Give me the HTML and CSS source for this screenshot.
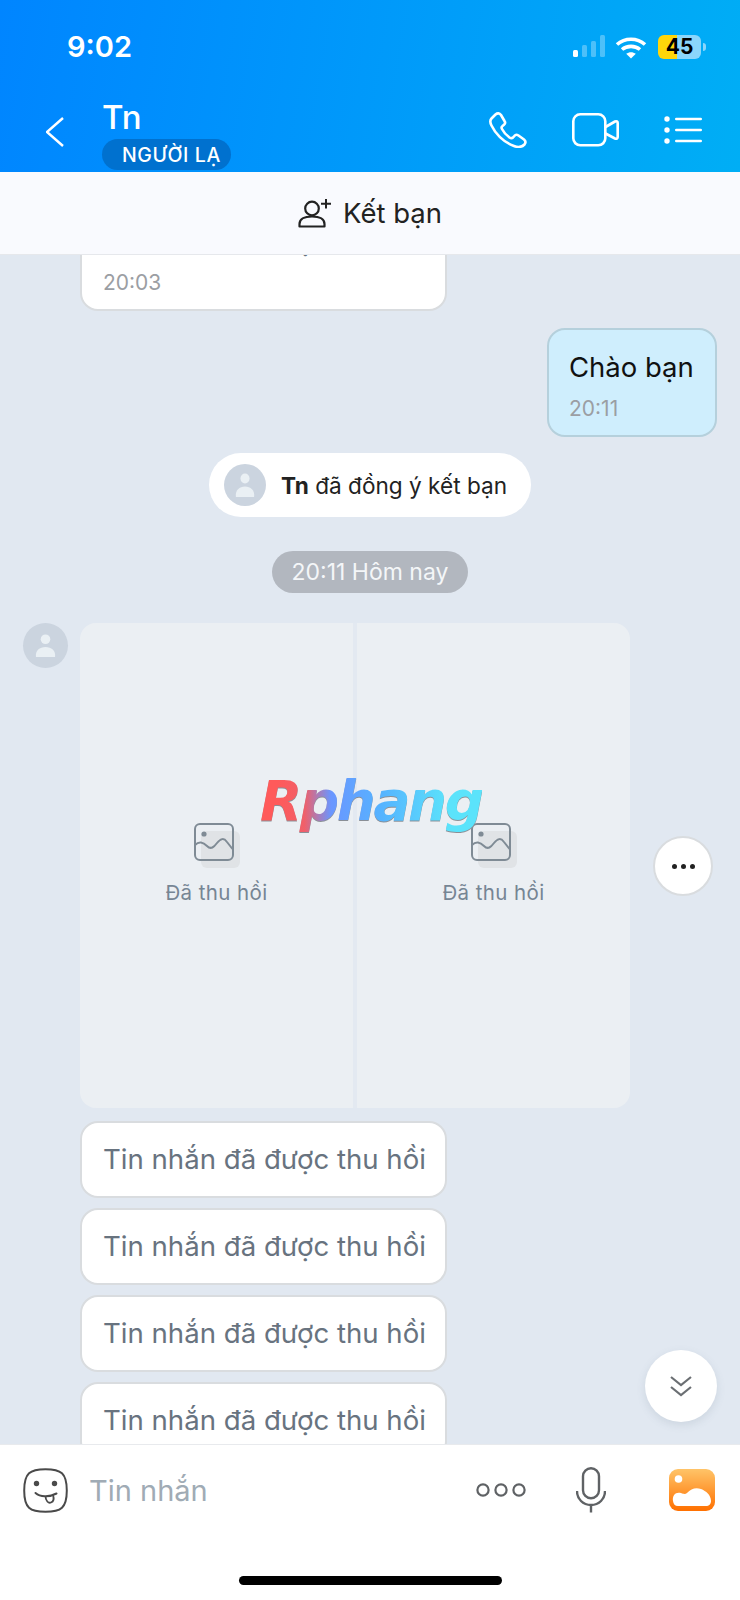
FILE: index.html
```html
<!DOCTYPE html>
<html lang="vi">
<head>
    <meta charset="utf-8" />
    <title>Tn</title>
    <link rel="stylesheet" href="styles.css">
</head>
<body>
    <div class="phone">
        <!--Header-->
        <header class="header">
            <div class="status">
                <span class="clock">9:02</span>
                <div class="status-icons">
                    <svg class="signal" width="32" height="24" viewBox="0 0 32 24">
                        <rect x="0" y="15" width="5" height="7" rx="1.5" fill="#fff" />
                        <rect x="9" y="10" width="5" height="12" rx="1.5" fill="#fff" opacity=".3" />
                        <rect x="18" y="6" width="5" height="16" rx="1.5" fill="#fff" opacity=".3" />
                        <rect x="27" y="0" width="5" height="22" rx="1.5" fill="#fff" opacity=".3" />
                    </svg>
                    <svg class="wifi" width="32" height="24" viewBox="0 0 32 24" fill="none" stroke="#fff" stroke-width="3.6">
                        <path d="M2 9.5C9.800 2.500 22.200 2.500 30 9.500" />
                        <path d="M7 14.500C11.900 10.300 20.100 10.300 25 14.500" />
                        <path d="M16 23.500L11.200 18.800C14 16.600 18 16.600 20.800 18.800Z" fill="#fff" stroke="none" />
                    </svg>
                    <div class="battery"><span class="battery-num">45</span></div>
                    <span class="battery-nub"></span>
                </div>
            </div>
            <div class="nav">
                <svg class="back" width="18" height="30" viewBox="0 0 18 30" fill="none" stroke="#fff" stroke-width="2.400">
                    <path d="M17 1L1 15L17 29" />
                </svg>
                <div class="nav-title">
                    <div class="name">Tn</div>
                    <div class="badge">NGƯỜI LẠ</div>
                </div>
                <div class="nav-actions">
                    <svg width="38" height="36" viewBox="0 0 38 36" fill="none" stroke="#fff" stroke-width="2.600" stroke-linejoin="round">
                        <path d="M2.500 6.500C1 8 1 10.500 2.500 13.500C6 21 14 30 25 34C29 35.500 33 35 35.500 32.500C37 30.500 36.800 29 35 27.500L29.500 23.500C28 22.500 26.500 22.500 25.500 23.800L24 25.500C23 26.500 22 26.500 20.500 25.500C17.500 23.300 14.500 20 13 17C12.300 15.700 12.400 14.800 13.500 14L15 12.800C16.200 11.800 16.500 10.500 15.500 9L12 3C10.500 1 8.500 .800 6.500 2.500Z" />
                    </svg>
                    <svg width="47" height="34" viewBox="0 0 47 34" fill="none" stroke="#fff" stroke-width="2.600" stroke-linejoin="round">
                        <rect x="1.300" y="1.300" width="32" height="31" rx="7" />
                        <path d="M33.500 14L43 8.500C44.500 7.800 45.700 8.500 45.700 10V24C45.700 25.500 44.500 26.200 43 25.500L33.500 20.500" />
                    </svg>
                    <svg width="38" height="28" viewBox="0 0 38 28" fill="#fff">
                        <circle cx="3" cy="3" r="2.700" />
                        <circle cx="3" cy="14" r="2.700" />
                        <circle cx="3" cy="25" r="2.700" />
                        <rect x="11" y="1.800" width="27" height="2.400" rx="1.200" />
                        <rect x="11" y="12.800" width="27" height="2.400" rx="1.200" />
                        <rect x="11" y="23.800" width="27" height="2.400" rx="1.200" />
                    </svg>
                </div>
            </div>
        </header>

        <div class="action-bar">
            <svg width="34" height="30" viewBox="0 0 34 30" fill="none" stroke="#222" stroke-width="2.200">
                <circle cx="14" cy="10.500" r="6.800" />
                <path d="M1.500 28.500V26C1.500 21 6 18.500 14 18.500C22 18.500 26.500 21 26.500 26V28.500Z" stroke-linejoin="round" />
                <path d="M28 1V10.500M23 5.700H33" stroke-width="2" />
            </svg>
            <span>Kết bạn</span>
        </div>

        <!--Messages-->
        <main class="chat">
            <div class="bubble bubble-clipped">
                <div class="bubble-text">Tin nhắn đã được thu hồi</div>
                <div class="bubble-time">20:03</div>
            </div>
            <div class="bubble-sent">
                <div class="sent-text">Chào bạn</div>
                <div class="bubble-time">20:11</div>
            </div>
            <div class="notice">
                <div class="avatar avatar-small">
                    <svg width="20" height="26" viewBox="0 0 22 26" preserveAspectRatio="none" fill="#eaf0f4">
                        <circle cx="11" cy="6.500" r="5" />
                        <path d="M1 25C0 18 5 14.500 11 14.500C17 14.500 22 18 21 25Z" />
                    </svg>
                </div>
                <span><b>Tn</b> đã đồng ý kết bạn</span>
            </div>
            <div class="time-chip">20:11 Hôm nay</div>
            <div class="album-row">
                <div class="avatar">
                    <svg width="21" height="25" viewBox="0 0 22 26" preserveAspectRatio="none" fill="#eaf0f4">
                        <circle cx="11" cy="6.500" r="5" />
                        <path d="M1 25C0 18 5 14.500 11 14.500C17 14.500 22 18 21 25Z" />
                    </svg>
                </div>
                <div class="album">
                    <div class="album-cell">
                        <svg class="recalled-icon" width="46" height="45" viewBox="0 0 46 45" fill="none">
                            <rect x="7" y="8" width="39" height="37" rx="6" fill="#e0e3e6" />
                            <rect x="1" y="1" width="38" height="36" rx="5" stroke="#7f8b95" stroke-width="2" />
                            <circle cx="10" cy="11" r="2.600" fill="#7f8b95" />
                            <path d="M1 22C5 18 9 19 13 23C17 27 20 24 23 20C27 15 30 15 33 19L38.500 26" stroke="#7f8b95" stroke-width="2" />
                        </svg>
                        <div class="recalled-label">Đã thu hồi</div>
                    </div>
                    <div class="album-cell">
                        <svg class="recalled-icon" width="46" height="45" viewBox="0 0 46 45" fill="none">
                            <rect x="7" y="8" width="39" height="37" rx="6" fill="#e0e3e6" />
                            <rect x="1" y="1" width="38" height="36" rx="5" stroke="#7f8b95" stroke-width="2" />
                            <circle cx="10" cy="11" r="2.600" fill="#7f8b95" />
                            <path d="M1 22C5 18 9 19 13 23C17 27 20 24 23 20C27 15 30 15 33 19L38.500 26" stroke="#7f8b95" stroke-width="2" />
                        </svg>
                        <div class="recalled-label">Đã thu hồi</div>
                    </div>
                </div>
            </div>
            <div class="bubble bubble-recalled">Tin nhắn đã được thu hồi</div>
            <div class="bubble bubble-recalled">Tin nhắn đã được thu hồi</div>
            <div class="bubble bubble-recalled">Tin nhắn đã được thu hồi</div>
            <div class="bubble bubble-recalled">Tin nhắn đã được thu hồi</div>

            <div class="watermark">Rphang</div>
            <div class="more-btn"><i></i><i></i><i></i></div>
            <div class="scroll-btn">
                <svg width="22" height="22" viewBox="0 0 22 22" fill="none" stroke="#6b6f73" stroke-width="2.200">
                    <path d="M1 2L11 10L21 2" />
                    <path d="M1 12L11 20L21 12" />
                </svg>
            </div>
        </main>

        <!--Composer-->
        <footer class="composer">
            <div class="composer-row">
                <svg width="45" height="45" viewBox="0 0 45 45" fill="none" stroke="#4a4a4a" stroke-width="2">
                    <path d="M22.500 1.200C38 1.200 43.800 5 43.800 22.500C43.800 40 38 43.800 22.500 43.800C7 43.800 1.200 40 1.200 22.500C1.200 5 7 1.200 22.500 1.200Z" />
                    <circle cx="13.500" cy="15.500" r="2.700" fill="#4a4a4a" stroke="none" />
                    <circle cx="31.500" cy="15.500" r="2.700" fill="#4a4a4a" stroke="none" />
                    <path d="M12.500 25C17 29 26 29.500 33.500 25.500" stroke-linecap="round" />
                    <path d="M22.500 28C22.500 33 25.500 35.500 28 34.500C31 33.500 31 30 30 27" stroke-width="1.800" />
                </svg>
                <span class="placeholder">Tin nhắn</span>
                <svg class="composer-dots" width="50" height="14" viewBox="0 0 50 14" fill="none" stroke="#5f6265" stroke-width="2.200">
                    <circle cx="7" cy="7" r="5.600" />
                    <circle cx="25" cy="7" r="5.600" />
                    <circle cx="43" cy="7" r="5.600" />
                </svg>
                <svg class="composer-mic" width="30" height="46" viewBox="0 0 30 46" fill="none" stroke="#5f6265" stroke-width="2.400">
                    <rect x="7" y="1.200" width="16" height="30" rx="8" />
                    <path d="M1 24C1 32 7 38 15 38C23 38 29 32 29 24" />
                    <path d="M15 38V45.500" />
                </svg>
                <svg class="composer-image" width="46" height="42" viewBox="0 0 46 42">
                    <defs>
                        <linearGradient id="photoFill" x1="0" y1="0" x2="0" y2="1">
                            <stop offset="0" stop-color="#ffc468" />
                            <stop offset="1" stop-color="#ff7000" />
                        </linearGradient>
                    </defs>
                    <rect width="46" height="42" rx="9" fill="url(#photoFill)" />
                    <circle cx="9.500" cy="10" r="3.800" fill="#fff" />
                    <path d="M4 32C3 26 7 22.500 12 24C15 25 16 25.500 18 24C22 19.500 27 18 32 20C37 22 42 26 42 32C42 35 40 37 37 37H9C6 37 4.300 35 4 32Z" fill="#fff" />
                </svg>
            </div>
            <div class="home-bar"></div>
        </footer>
    </div>
</body>
</html>
```

FILE: styles.css
```css
* {
    box-sizing: border-box;
}

body {
    margin: 0;
    font-family: Inter, "Noto Sans", sans-serif;
}

.phone {
    width: 740px;
    height: 1600px;
    display: flex;
    flex-direction: column;
    overflow: hidden;
}

/* header */
.header {
    height: 172px;
    flex: none;
    background: linear-gradient(100deg, #0085ff, #00aef5);
    color: #fff;
}

.status {
    height: 94px;
    padding: 30px 34px 0 67px;
    display: flex;
    justify-content: space-between;
    align-items: flex-start;
}

.clock {
    font-size: 29px;
    font-weight: 600;
    line-height: 34px;
}

.status-icons {
    display: flex;
    align-items: center;
    height: 24px;
    margin-top: 5px;
}

.wifi {
    margin-left: 10px;
}

.battery {
    width: 43px;
    height: 24px;
    margin-left: 11px;
    border-radius: 6px;
    background: linear-gradient(90deg, #ffd60a 45%, #8bd6fb 45%);
    color: #000;
    text-align: center;
}

.battery-num {
    font-size: 21px;
    font-weight: 700;
    line-height: 24px;
}

.battery-nub {
    width: 3px;
    height: 8px;
    margin-left: 2px;
    border-radius: 0 3px 3px 0;
    background: #8bd6fb;
}

.nav {
    display: flex;
    align-items: flex-start;
    padding: 0 38px 0 46px;
}

.back {
    margin-top: 23px;
}

.nav-title {
    margin-left: 38px;
    margin-top: 7px;
}

.name {
    font-size: 33px;
    font-weight: 500;
    line-height: 38px;
    margin-top: -3px;
    margin-bottom: 3px;
}

.badge {
    width: 129px;
    height: 31px;
    border-radius: 16px;
    background: #0071cf;
    font-size: 19.500px;
    font-weight: 500;
    line-height: 33px;
    letter-spacing: .6px;
    padding-left: 20px;
    white-space: nowrap;
}

.nav-actions {
    margin-left: auto;
    display: flex;
    gap: 45px;
    align-items: center;
    margin-top: 18px;
}

/* add friend bar */
.action-bar {
    height: 83px;
    flex: none;
    background: #f9fafe;
    border-bottom: 1px solid #e6e8ec;
    display: flex;
    align-items: center;
    justify-content: center;
    gap: 11px;
    color: #222;
    font-size: 27.500px;
}

/* messages */
.chat {
    position: relative;
    flex: 1;
    overflow: hidden;
    background: #e1e8f1;
    padding: 0 23px;
    display: flex;
    flex-direction: column;
    align-items: flex-start;
}

.bubble {
    width: 367px;
    margin-left: 57px;
    padding: 0 21px;
    background: #fff;
    border: 2px solid #d9dcdf;
    border-radius: 18px;
    flex: none;
}

.bubble-clipped {
    height: 109px;
    margin-top: -53px;
    padding-top: 20px;
}

.bubble-text {
    font-size: 27.600px;
    line-height: 34px;
    color: #68737f;
    white-space: nowrap;
}

.bubble-time {
    font-size: 21px;
    line-height: 26px;
    color: #9b9ea3;
    margin-top: 12px;
}

.bubble-sent {
    align-self: flex-end;
    width: 170px;
    height: 109px;
    margin-top: 17px;
    padding: 20px 20px 0;
    background: #cfeefd;
    border: 2px solid #b5d0dc;
    border-radius: 18px;
    flex: none;
}

.sent-text {
    font-size: 27.500px;
    line-height: 34px;
    color: #111;
    white-space: nowrap;
}

.notice {
    align-self: center;
    height: 64px;
    margin-top: 16px;
    padding: 0 24px 0 15px;
    display: flex;
    align-items: center;
    gap: 15px;
    background: #fff;
    border-radius: 32px;
    font-size: 22.600px;
    color: #222;
    white-space: nowrap;
    flex: none;
}

.avatar {
    width: 45px;
    height: 45px;
    border-radius: 50%;
    background: #cbd4df;
    display: flex;
    align-items: center;
    justify-content: center;
    flex: none;
}

.avatar-small {
    width: 42px;
    height: 42px;
}

.time-chip {
    align-self: center;
    height: 42px;
    margin-top: 34px;
    padding: 0 20px;
    border-radius: 21px;
    background: #b2b7bf;
    color: #f4f6f8;
    font-size: 23px;
    line-height: 42px;
    white-space: nowrap;
    flex: none;
}

.album-row {
    display: flex;
    gap: 12px;
    margin-top: 30px;
    flex: none;
}

.album {
    width: 550px;
    height: 485px;
    display: flex;
    gap: 4px;
    background: #e3e9f1;
    border-radius: 16px;
    overflow: hidden;
}

.album-cell {
    flex: 1;
    background: #ebeff3;
    display: flex;
    flex-direction: column;
    align-items: center;
    justify-content: center;
}

.recalled-icon {
    margin-left: 0;
}

.recalled-label {
    margin-top: 10px;
    font-size: 20.500px;
    line-height: 30px;
    letter-spacing: .4px;
    color: #768594;
}

.album-row + .bubble {
    margin-top: 13px;
}

.bubble-recalled {
    height: 77px;
    font-size: 27.600px;
    line-height: 73px;
    color: #68737f;
    white-space: nowrap;
}

.bubble-recalled + .bubble-recalled {
    margin-top: 10px;
}

/* over the messages */
.watermark {
    position: absolute;
    left: 260px;
    top: 511px;
    font-family: "DejaVu Sans", sans-serif;
    font-size: 55px;
    font-weight: 700;
    font-style: italic;
    line-height: 70px;
    letter-spacing: -2.500px;
    background: linear-gradient(90deg, #ff5a5a 8%, #f0606a 20%, #6a96ff 32%, #55b4ff 55%, #5be3fb 85%);
    -webkit-background-clip: text;
    background-clip: text;
    color: transparent;
    filter: drop-shadow(0 1px 0 #8a8f96);
}

.more-btn {
    position: absolute;
    left: 653px;
    top: 581px;
    width: 60px;
    height: 60px;
    border-radius: 50%;
    background: #fff;
    border: 2px solid #d9dcdf;
    display: flex;
    align-items: center;
    justify-content: center;
    gap: 4px;
}

.more-btn i {
    width: 5px;
    height: 5px;
    border-radius: 50%;
    background: #222;
}

.scroll-btn {
    position: absolute;
    left: 645px;
    top: 1095px;
    width: 72px;
    height: 72px;
    border-radius: 50%;
    background: #fff;
    box-shadow: 0 3px 8px rgba(90, 110, 130, .15);
    display: flex;
    align-items: center;
    justify-content: center;
}

/* composer */
.composer {
    height: 156px;
    flex: none;
    background: #fff;
    border-top: 1px solid #e8eaed;
    position: relative;
}

.composer-row {
    display: flex;
    align-items: center;
    height: 46px;
    margin-top: 22px;
    padding: 0 25px 0 23px;
}

.placeholder {
    margin-left: 21px;
    font-size: 29px;
    color: #a0abb5;
}

.composer-dots {
    margin-left: auto;
}

.composer-mic {
    margin-left: 50px;
}

.composer-image {
    margin-left: 63px;
}

.home-bar {
    width: 263px;
    height: 9px;
    margin: 63px auto 0;
    border-radius: 5px;
    background: #000;
}
```
